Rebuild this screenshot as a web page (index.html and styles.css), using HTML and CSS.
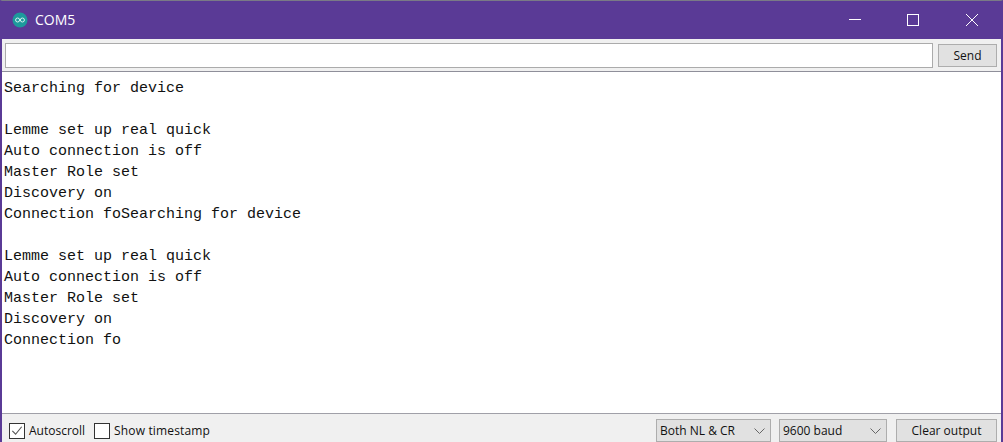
FILE: index.html
```html
<!DOCTYPE html>
<html lang="en">
<head>
<meta charset="utf-8">
<title>COM5</title>
<link rel="stylesheet" href="styles.css">
</head>
<body>
<div class="window">
  <header class="titlebar">
    <svg class="app-icon" width="16" height="16" viewBox="0 0 16 16"><circle cx="8" cy="8" r="7.5" fill="#1d9a9c"/><circle cx="5.6" cy="8" r="2" fill="none" stroke="#d9f2f2" stroke-width="1"/><circle cx="10.4" cy="8" r="2" fill="none" stroke="#d9f2f2" stroke-width="1"/></svg>
    <span class="title">COM5</span>
    <div class="controls">
      <svg class="ctl" width="58" height="38" viewBox="0 0 58 38"><path d="M22 18.5h12" stroke="#fff" fill="none"/></svg>
      <svg class="ctl" width="58" height="38" viewBox="0 0 58 38"><rect x="22.5" y="13.5" width="11" height="11" stroke="#fff" fill="none"/></svg>
      <svg class="ctl" width="58" height="38" viewBox="0 0 58 38"><path d="M23 13l12 12M35 13l-12 12" stroke="#fff" fill="none"/></svg>
    </div>
  </header>
  <div class="sendrow">
    <input class="sendinput" type="text" aria-label="Message">
    <button class="btn send">Send</button>
  </div>
  <pre class="output">Searching for device

Lemme set up real quick
Auto connection is off
Master Role set
Discovery on
Connection foSearching for device

Lemme set up real quick
Auto connection is off
Master Role set
Discovery on
Connection fo</pre>
  <footer class="statusbar">
    <label class="check"><span class="box"><svg width="15" height="15" viewBox="0 0 15 15"><path d="M2.5 8l3.5 3.5 6.5-8" stroke="#555" stroke-width="1.2" fill="none"/></svg></span>Autoscroll</label>
    <label class="check"><span class="box"></span><span class="wide">Show timestamp</span></label>
    <div class="spacer"></div>
    <div class="select nl">Both NL &amp; CR<svg width="11" height="6" viewBox="0 0 11 6"><path d="M.5.5l5 5 5-5" stroke="#666" fill="none"/></svg></div>
    <div class="select baud">9600 baud<svg width="11" height="6" viewBox="0 0 11 6"><path d="M.5.5l5 5 5-5" stroke="#666" fill="none"/></svg></div>
    <button class="btn clear">Clear output</button>
  </footer>
</div>
</body>
</html>
```
FILE: styles.css
```css
* { box-sizing: border-box; }
html, body { margin: 0; height: 100%; overflow: hidden; }
body { font-family: "Open Sans", "Noto Sans", sans-serif; font-size: 12px; color: #111; }
.window {
  width: 1003px; height: 442px;
  display: flex; flex-direction: column;
  border-left: 2px solid #5a3a96; border-right: 2px solid #5a3a96;
  border-top: 1px solid #7a7a86;
  background: #f0f0f0;
}
.titlebar {
  height: 38px; flex: none;
  display: flex; align-items: center;
  background: #5a3a96; color: #fff;
  padding-left: 10px;
}
.app-icon { margin-top: -1px; }
.title { margin-left: 7px; font-size: 14px; margin-top: -1px; }
.controls { margin-left: auto; display: flex; }
.ctl { display: block; }
.sendrow {
  height: 33px; flex: none;
  display: flex; align-items: flex-start;
  padding: 4px 4px 0 3px; gap: 5px;
  border-bottom: 1px solid #8f8f9a;
}
.sendinput {
  flex: 1; height: 25px; margin: 0;
  border: 1px solid #ababab; background: #fff; padding: 0;
}
.btn {
  font: inherit; color: #111; background: #e1e1e1;
  border: 1px solid #adadad; padding: 0; margin: 0;
}
.send { width: 59px; height: 23px; margin-top: 1px; }
.output {
  flex: 1; margin: 0;
  background: #fff;
  padding: 6px 0 0 2px;
  font-family: "Liberation Mono", monospace;
  font-size: 15px; line-height: 21px;
  color: #111;
}
.statusbar {
  height: 29px; flex: none;
  display: flex; align-items: center;
  border-top: 1px solid #a0a0a8;
  padding: 5px 4px 0 7px;
}
.check { display: flex; align-items: center; gap: 4px; margin-right: 9px; }
.wide { letter-spacing: 0.15px; }
.box {
  width: 16px; height: 16px;
  border: 1px solid #333; background: #fff;
  display: flex; align-items: center; justify-content: center;
}
.box svg { display: block; }
.spacer { flex: 1; }
.select {
  height: 23px;
  display: flex; align-items: center; justify-content: space-between;
  background: #e1e1e1; border: 1px solid #adadad;
  padding: 0 5px 0 3px; margin-right: 8px;
}
.nl { width: 115px; }
.baud { width: 108px; margin-right: 9px; }
.clear { width: 101px; height: 23px; }
```
